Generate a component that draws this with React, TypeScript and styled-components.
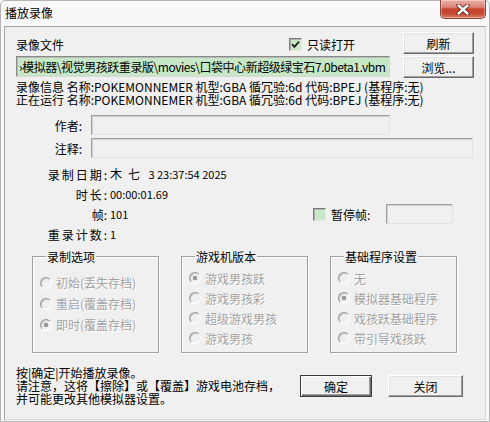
import React from "react";
import styled, { createGlobalStyle } from "styled-components";

const Global = createGlobalStyle`
  html, body { margin: 0; padding: 0; background: #ffffff; }
  body {
    font-family: "Noto Sans CJK SC", "Liberation Sans", sans-serif;
    font-size: 12px;
    color: #000;
  }
  * { box-sizing: border-box; }
  fieldset { margin: 0; min-width: 0; }
`;

const Window = styled.div`
  width: 490px;
  height: 422px;
  background: #f8f8f8;
  border: 1px solid #b4b4b4;
  border-radius: 5px 5px 0 0;
  display: flex;
  flex-direction: column;
  padding: 0 3px 1px 3px;
`;

const TitleBar = styled.div`
  height: 25px;
  display: flex;
  align-items: flex-start;
  flex-shrink: 0;
`;

const Title = styled.div`
  margin: 3px 0 0 1px;
  line-height: 18px;
  font-size: 12px;
  color: #000;
`;

const CloseButton = styled.div`
  margin-left: auto;
  margin-top: -1px;
  width: 46px;
  height: 19px;
  border: 1px solid #86463c;
  border-top: none;
  border-radius: 0 0 5px 5px;
  background: linear-gradient(#eab0a6 0%, #dc8576 40%, #c8432c 50%, #c54a33 75%, #db7b63 100%);
  box-shadow: inset 0 0 0 1px rgba(255, 255, 255, 0.35);
  display: flex;
  align-items: center;
  justify-content: center;
`;

const Client = styled.div`
  flex: 1;
  background: #f0f0f0;
  border: 1px solid;
  border-color: #a5a5a5 #d9d9d9 #d9d9d9 #a5a5a5;
  display: flex;
  flex-direction: column;
`;

const TopSection = styled.div`
  display: flex;
  padding-left: 11px;
`;

const LeftCol = styled.div`
  width: 374px;
`;

const HeaderRow = styled.div`
  margin-top: 10px;
  height: 15px;
  display: flex;
  align-items: center;
  line-height: 13px;
`;

const CheckWrap = styled.div<{ $ml?: number }>`
  display: flex;
  align-items: center;
  gap: 5px;
  margin-left: ${(p) => p.$ml ?? 0}px;
  line-height: 13px;
`;

const CheckBox = styled.span`
  width: 13px;
  height: 13px;
  flex-shrink: 0;
  border: 1px solid;
  border-color: #7a7a7a #e8e8e8 #e8e8e8 #7a7a7a;
  box-shadow: inset 1px 1px 0 #b0b0b0;
  background: #c8e8c8;
  display: flex;
  align-items: center;
  justify-content: center;
`;

const PathField = styled.div`
  margin-top: 4px;
  height: 21px;
  border: 1px solid;
  border-color: #8a8a8a #d8d8d8 #d8d8d8 #8a8a8a;
  box-shadow: inset 1px 1px 0 #b8b8b8;
  background: #c6e8c6;
  padding: 0 0 0 2px;
  display: flex;
  align-items: center;
  white-space: nowrap;
  overflow: hidden;
  line-height: 13px;
  font-size: 12px;
  letter-spacing: -0.45px;
`;

const RightCol = styled.div`
  margin-left: 13px;
  width: 71px;
  padding-top: 5px;
  display: flex;
  flex-direction: column;
  gap: 2px;
`;

const Button = styled.div<{ $w?: number; $default?: boolean }>`
  width: ${(p) => p.$w ?? 71}px;
  height: 22px;
  background: #f0f0f0;
  border: 1px solid;
  border-color: ${(p) => (p.$default ? "#3c3c3c" : "#ffffff #6a6a6a #6a6a6a #ffffff")};
  box-shadow: ${(p) =>
    p.$default
      ? "inset 1px 1px 0 #ffffff, inset -1px -1px 0 #6a6a6a, inset -2px -2px 0 #a0a0a0"
      : "inset -1px -1px 0 #a0a0a0, inset 1px 1px 0 #e3e3e3"};
  display: flex;
  align-items: center;
  justify-content: center;
  line-height: 13px;
  font-size: 12px;
`;

const InfoBlock = styled.div`
  margin-top: 2px;
  padding-left: 11px;
  line-height: 13px;
  white-space: nowrap;
`;

const FieldRow = styled.div<{ $mt: number }>`
  margin-top: ${(p) => p.$mt}px;
  height: 20px;
  display: flex;
  align-items: center;
`;

const FieldLabel = styled.div`
  width: 77px;
  text-align: right;
  margin-right: 9px;
  line-height: 13px;
`;

const Field = styled.div<{ $w: number }>`
  width: ${(p) => p.$w}px;
  height: 20px;
  background: #f0f0f0;
  border: 1px solid;
  border-color: #a0a0a0 #e3e3e3 #e3e3e3 #a0a0a0;
  box-shadow: inset 1px 1px 0 #d0d0d0;
`;

const DateSection = styled.div`
  margin-top: 6px;
  display: flex;
  flex-direction: column;
`;

const DateRow = styled.div`
  height: 20px;
  display: flex;
  align-items: center;
  padding-right: 32px;
  line-height: 13px;
`;

const DateLabel = styled.div`
  width: 102px;
  text-align: right;
  white-space: nowrap;
`;

const Spaced = styled.span`
  letter-spacing: 2px;
`;

const DateValue = styled.div`
  flex: 1;
  padding-left: 3px;
  white-space: pre;
`;

const Small = styled.span`
  font-size: 11px;
`;

const PauseGroup = styled.div`
  width: 140px;
  display: flex;
  align-items: center;
  gap: 5px;
`;

const PauseField = styled(Field)`
  margin-left: auto;
`;

const Groups = styled.div`
  margin-top: 6px;
  padding-left: 27px;
  display: flex;
  gap: 22px;
`;

const Group = styled.fieldset<{ $top: number }>`
  width: 127px;
  height: 103px;
  padding: 0;
  border: 1px solid #a0a0a0;
  box-shadow: inset 1px 1px 0 #ffffff, 1px 1px 0 #ffffff;
  display: flex;
  flex-direction: column;
  padding-top: ${(p) => p.$top}px;
  padding-left: 7px;
`;

const Legend = styled.legend`
  margin-left: 6px;
  padding: 0 1px;
  line-height: 13px;
  font-size: 12px;
`;

const RadioRow = styled.div<{ $h: number }>`
  height: ${(p) => p.$h}px;
  display: flex;
  align-items: center;
  gap: 4px;
  color: #a2a2a2;
  text-shadow: 1px 1px 0 #ffffff;
  line-height: 13px;
  white-space: nowrap;
`;

const Radio = styled.span<{ $on?: boolean }>`
  width: 12px;
  height: 12px;
  flex-shrink: 0;
  border-radius: 50%;
  border: 1px solid;
  border-color: #9a9a9a #ffffff #ffffff #9a9a9a;
  box-shadow: inset 1px 1px 0 #c8c8c8;
  background: ${(p) =>
    p.$on ? "radial-gradient(circle, #9a9a9a 0 2px, #f0f0f0 2.6px)" : "#f0f0f0"};
`;

const Bottom = styled.div`
  margin-top: 13px;
  padding-left: 11px;
  display: flex;
`;

const Message = styled.div`
  width: 284px;
  line-height: 13px;
  white-space: nowrap;
`;

const BottomButtons = styled.div`
  margin-top: 9px;
  display: flex;
  gap: 16px;
`;

const CheckMark = () => (
  <svg width="9" height="9" viewBox="0 0 9 9">
    <path d="M1 4.2 L3.4 6.8 L8 1.6" fill="none" stroke="#1e1e1e" strokeWidth="1.8" />
  </svg>
);

const CloseX = () => (
  <svg width="14" height="11" viewBox="0 0 14 11">
    <path d="M2.5 1.5 L11.5 9.5 M11.5 1.5 L2.5 9.5" stroke="#5a2018" strokeWidth="4.2" strokeLinecap="round" />
    <path d="M2.5 1.5 L11.5 9.5 M11.5 1.5 L2.5 9.5" stroke="#ffffff" strokeWidth="2.4" strokeLinecap="round" />
  </svg>
);

type Opt = { label: string; on?: boolean };

const groups: { title: string; top: number; h: number; opts: Opt[] }[] = [
  {
    title: "录制选项",
    top: 9,
    h: 21,
    opts: [{ label: "初始(丢失存档)" }, { label: "重启(覆盖存档)" }, { label: "即时(覆盖存档)", on: true }],
  },
  {
    title: "游戏机版本",
    top: 5,
    h: 20,
    opts: [{ label: "游戏男孩跃", on: true }, { label: "游戏男孩彩" }, { label: "超级游戏男孩" }, { label: "游戏男孩" }],
  },
  {
    title: "基础程序设置",
    top: 5,
    h: 20,
    opts: [{ label: "无" }, { label: "模拟器基础程序", on: true }, { label: "戏孩跃基础程序" }, { label: "带引导戏孩跃" }],
  },
];

export default function App() {
  return (
    <>
      <Global />
      <Window>
        <TitleBar>
          <Title>播放录像</Title>
          <CloseButton>
            <CloseX />
          </CloseButton>
        </TitleBar>
        <Client>
          <TopSection>
            <LeftCol>
              <HeaderRow>
                <span>录像文件</span>
                <CheckWrap $ml={225}>
                  <CheckBox>
                    <CheckMark />
                  </CheckBox>
                  <span>只读打开</span>
                </CheckWrap>
              </HeaderRow>
              <PathField>›模拟器\视觉男孩跃重录版\movies\口袋中心新超级绿宝石7.0beta1.vbm</PathField>
            </LeftCol>
            <RightCol>
              <Button>刷新</Button>
              <Button>浏览...</Button>
            </RightCol>
          </TopSection>

          <InfoBlock>
            <div>录像信息 名称:POKEMONNEMER 机型:GBA 循冗验:6d 代码:BPEJ (基程序:无)</div>
            <div>正在运行 名称:POKEMONNEMER 机型:GBA 循冗验:6d 代码:BPEJ (基程序:无)</div>
          </InfoBlock>

          <FieldRow $mt={9}>
            <FieldLabel>作者:</FieldLabel>
            <Field $w={299} />
          </FieldRow>
          <FieldRow $mt={3}>
            <FieldLabel>注释:</FieldLabel>
            <Field $w={382} />
          </FieldRow>

          <DateSection>
            <DateRow>
              <DateLabel>
                <Spaced>录制日期</Spaced>:
              </DateLabel>
              <DateValue>
                {"木\u2002七\u2002\u2009"}
                <Small>3 23:37:54 2025</Small>
              </DateValue>
            </DateRow>
            <DateRow>
              <DateLabel>
                <Spaced>时长</Spaced>:
              </DateLabel>
              <DateValue>
                <Small>00:00:01.69</Small>
              </DateValue>
            </DateRow>
            <DateRow>
              <DateLabel>帧:</DateLabel>
              <DateValue>
                <Small>101</Small>
              </DateValue>
              <PauseGroup>
                <CheckBox />
                <span>暂停帧:</span>
                <PauseField $w={67} />
              </PauseGroup>
            </DateRow>
            <DateRow>
              <DateLabel>
                <Spaced>重录计数</Spaced>:
              </DateLabel>
              <DateValue>
                <Small>1</Small>
              </DateValue>
            </DateRow>
          </DateSection>

          <Groups>
            {groups.map((g) => (
              <Group key={g.title} $top={g.top}>
                <Legend>{g.title}</Legend>
                {g.opts.map((o) => (
                  <RadioRow key={o.label} $h={g.h}>
                    <Radio $on={o.on} />
                    <span>{o.label}</span>
                  </RadioRow>
                ))}
              </Group>
            ))}
          </Groups>

          <Bottom>
            <Message>
              <div>按|确定|开始播放录像。</div>
              <div>请注意，这将【擦除】或【覆盖】游戏电池存档，</div>
              <div>并可能更改其他模拟器设置。</div>
            </Message>
            <BottomButtons>
              <Button $w={72} $default>
                确定
              </Button>
              <Button $w={75}>关闭</Button>
            </BottomButtons>
          </Bottom>
        </Client>
      </Window>
    </>
  );
}
